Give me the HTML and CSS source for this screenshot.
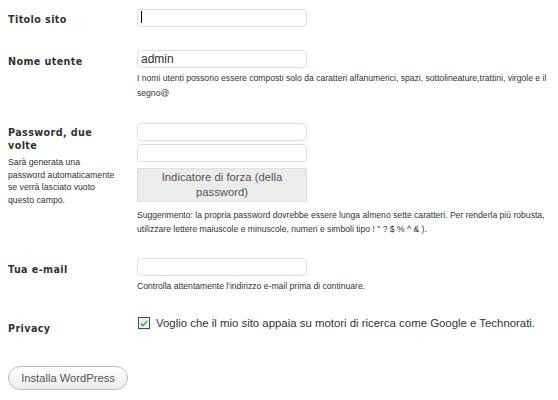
FILE: index.html
```html
<!DOCTYPE html>
<html lang="it">
<head>
  <meta charset="UTF-8" />
  <title>WordPress &rsaquo; Installazione</title>
  <link rel="stylesheet" href="styles.css">
</head>
<body>
  <form class="setup">
    <div class="row row-title">
      <div class="label"><label for="weblog_title">Titolo sito</label></div>
      <div class="field">
        <span class="focused"><input class="text" id="weblog_title" type="text" value=""></span>
      </div>
    </div>

    <div class="row row-user">
      <div class="label"><label for="user_name">Nome utente</label></div>
      <div class="field">
        <input class="text" id="user_name" type="text" value="admin">
        <p class="note">I nomi utenti possono essere composti solo da caratteri alfanumerici, spazi, sottolineature,trattini, virgole e il segno@</p>
      </div>
    </div>

    <div class="row row-pass">
      <div class="label label-pass">
        <label for="pass1">Password, due volte</label>
        <p class="hint">Sarà generata una password automaticamente se verrà lasciato vuoto questo campo.</p>
      </div>
      <div class="field">
        <input class="text" id="pass1" type="password">
        <input class="text second" id="pass2" type="password">
        <div class="strength">Indicatore di forza (della password)</div>
        <p class="note note-tip">Suggerimento: la propria password dovrebbe essere lunga almeno sette caratteri. Per renderla più robusta, utilizzare lettere maiuscole e minuscole, numeri e simboli tipo ! " ? $ % ^ &amp; ).</p>
      </div>
    </div>

    <div class="row row-mail">
      <div class="label"><label for="admin_email">Tua e-mail</label></div>
      <div class="field">
        <input class="text" id="admin_email" type="text">
        <p class="note">Controlla attentamente l'indirizzo e-mail prima di continuare.</p>
      </div>
    </div>

    <div class="row row-privacy">
      <div class="label label-privacy"><span>Privacy</span></div>
      <div class="field">
        <label class="check">
          <svg class="box" width="12" height="12" viewBox="0 0 12 12">
            <rect x="0.5" y="0.5" width="11" height="11" fill="#fff" stroke="#1c5180"/>
            <rect x="1.5" y="1.5" width="9" height="9" fill="#eeeee8"/>
            <path d="M2.8 5.6 L5 7.8 L9.2 3.2 L9.2 5 L5 9.6 L2.8 7.4 Z" fill="#21a121"/>
          </svg>
          Voglio che il mio sito appaia su motori di ricerca come Google e Technorati.
        </label>
      </div>
    </div>

    <button class="install" type="button">Installa WordPress</button>
  </form>
</body>
</html>
```

FILE: styles.css
```css
* {
  box-sizing: border-box;
}

body {
  margin: 8px;
  background: #fff;
  color: #333;
  font-family: "Liberation Sans", Arial, sans-serif;
}

.setup {
  display: flex;
  flex-direction: column;
}

.row {
  display: flex;
}

.label {
  width: 129px;
  flex-shrink: 0;
  padding-right: 20px;
  padding-top: 5px;
  font-family: "DejaVu Sans", Verdana, sans-serif;
  font-weight: bold;
  font-size: 9.6px;
  line-height: 13px;
  letter-spacing: 0.4px;
  color: #333;
}

.label-pass {
  padding-top: 3px;
}

.label-privacy {
  padding-top: 6px;
}

.field {
  flex: 1;
  display: flex;
  flex-direction: column;
  align-items: flex-start;
}

.row-user { margin-top: 23px; }
.row-pass { margin-top: 22px; }
.row-mail { margin-top: 22px; }
.row-privacy { margin-top: 22px; }

.text {
  width: 170px;
  height: 18px;
  margin: 0;
  padding: 0 3px;
  border: 1px solid #dfdfdf;
  border-radius: 4px;
  background: #fff;
  font-family: "Liberation Sans", Arial, sans-serif;
  font-size: 12px;
  color: #333;
  outline: none;
}

.focused {
  position: relative;
  display: inline-block;
}

.focused::after {
  content: "";
  position: absolute;
  left: 4px;
  top: 3px;
  width: 1px;
  height: 12px;
  background: #000;
}

.second {
  margin-top: 3px;
}

.strength {
  width: 170px;
  height: 34px;
  margin-top: 6px;
  padding-top: 1px;
  background: #ececec;
  border: 1px solid #e0e0e0;
  text-align: center;
  font-size: 11.3px;
  line-height: 15px;
  color: #555;
}

.note {
  margin: 3px 0 0;
  font-size: 8.6px;
  line-height: 15px;
  color: #333;
}

.note-tip {
  margin-top: 6px;
  line-height: 14px;
}

.hint {
  margin: 4px 0 0;
  font-family: "Liberation Sans", Arial, sans-serif;
  font-weight: normal;
  font-size: 8.7px;
  line-height: 12.7px;
  letter-spacing: 0;
}

.check {
  display: flex;
  align-items: center;
  gap: 6px;
  height: 14px;
  margin-left: 1px;
  font-size: 11.4px;
  color: #333;
}

.box {
  flex-shrink: 0;
}

.install {
  align-self: flex-start;
  width: 120px;
  height: 24px;
  margin-top: 31px;
  padding: 0;
  border: 1px solid #bbb;
  border-radius: 12px;
  background: linear-gradient(#fff, #ececec);
  font-family: "Liberation Sans", Arial, sans-serif;
  font-size: 11.2px;
  color: #555;
  cursor: pointer;
}
```
